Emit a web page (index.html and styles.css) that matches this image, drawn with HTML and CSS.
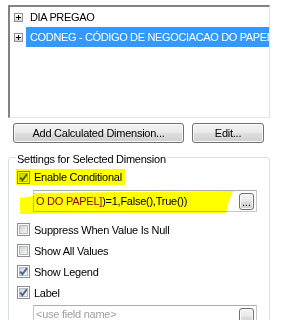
FILE: index.html
```html
<!DOCTYPE html>
<html>
<head>
<meta charset="utf-8">
<link rel="stylesheet" href="styles.css">
</head>
<body>
<svg class="defs" width="0" height="0">
  <defs>
    <linearGradient id="cbg" x1="0" y1="0" x2="1" y2="1">
      <stop offset="0" stop-color="#cbcfd5"/>
      <stop offset="1" stop-color="#f7f7f7"/>
    </linearGradient>
    <linearGradient id="pg" x1="0" y1="0" x2="0" y2="1">
      <stop offset="0" stop-color="#ffffff"/>
      <stop offset="1" stop-color="#d2d2d2"/>
    </linearGradient>
    <symbol id="box" viewBox="0 0 13 13">
      <rect x="0.5" y="0.5" width="12" height="12" fill="#fff" stroke="#8e8f8f"/>
      <rect x="2.5" y="2.5" width="8" height="8" fill="url(#cbg)" stroke="#b7bcc4"/>
    </symbol>
    <symbol id="check" viewBox="0 0 13 13">
      <rect x="0.5" y="0.5" width="12" height="12" fill="#fff" stroke="#8e8f8f"/>
      <rect x="2.5" y="2.5" width="8" height="8" fill="url(#cbg)" stroke="#b7bcc4"/>
      <path d="M3.2 6.6 L5.4 9.2 L9.9 3.2" fill="none" stroke="#4a5f97" stroke-width="1.9"/>
    </symbol>
    <symbol id="plus" viewBox="0 0 9 9">
      <rect x="0.5" y="0.5" width="8" height="8" fill="url(#pg)" stroke="#919191"/>
      <path d="M2 4.5 H7 M4.5 2 V7" stroke="#000" stroke-width="1"/>
    </symbol>
  </defs>
</svg>

<div class="listbox">
  <div class="row">
    <svg class="plus"><use href="#plus"/></svg>
    <span class="item">DIA PREGAO</span>
  </div>
  <div class="row">
    <svg class="plus"><use href="#plus"/></svg>
    <span class="item sel">CODNEG - CÓDIGO DE NEGOCIACAO DO PAPEL</span>
  </div>
</div>

<div class="buttons">
  <button class="btn add">Add Calculated Dimension...</button>
  <button class="btn edit">Edit...</button>
</div>

<div class="group">
  <div class="legend">Settings for Selected Dimension</div>

  <div class="hl">
    <svg class="cb"><use href="#check"/></svg>
    <span>Enable Conditional</span>
  </div>

  <div class="field cond">
    <span class="txt"><span class="red">O DO PAPEL]</span><span class="blue">)=1,False(),True())</span></span>
    <span class="dots">...</span>
  </div>

  <div class="opt"><svg class="cb"><use href="#box"/></svg><span>Suppress When Value Is Null</span></div>
  <div class="opt"><svg class="cb"><use href="#box"/></svg><span>Show All Values</span></div>
  <div class="opt"><svg class="cb"><use href="#check"/></svg><span>Show Legend</span></div>
  <div class="opt"><svg class="cb"><use href="#check"/></svg><span>Label</span></div>

  <div class="field name">
    <span class="txt ph">&lt;use field name&gt;</span>
    <span class="dots"></span>
  </div>
</div>

<svg class="marker" width="293" height="320" viewBox="0 0 293 320">
  <path d="M20 198 L34 196 L34 193 L120 192 L233 191 L229 201 L226 213 L120 213 L20 214 Z" fill="#ffff00"/>
</svg>
</body>
</html>
```

FILE: styles.css
```css
html, body {
  margin: 0;
  padding: 0;
  background: #ffffff;
}

body {
  position: relative;
  width: 293px;
  height: 320px;
  overflow: hidden;
  font-family: "Liberation Sans", Arial, sans-serif;
  font-size: 11px;
  letter-spacing: -0.25px;
  color: #000;
}

.defs {
  position: absolute;
  width: 0;
  height: 0;
}

.listbox {
  box-sizing: border-box;
  margin: 5px 0 0 8px;
  width: 262px;
  height: 113px;
  border-top: 2px solid #828282;
  border-left: 2px solid #828282;
  border-right: 1px solid #e3e3e3;
  border-bottom: 1px solid #e3e3e3;
  overflow: hidden;
  display: flex;
  flex-direction: column;
}

.row {
  display: flex;
  align-items: center;
  height: 20px;
  white-space: nowrap;
}

.plus {
  width: 9px;
  height: 9px;
  margin-left: 4px;
  margin-top: 1px;
  flex: none;
}

.item {
  margin-left: 3px;
  padding-left: 4px;
  height: 20px;
  line-height: 20px;
  letter-spacing: -0.35px;
  flex: 1;
  white-space: nowrap;
  overflow: hidden;
}

.item.sel {
  background: #3399ff;
  color: #ffffff;
}

.buttons {
  display: flex;
  gap: 8px;
  margin: 5px 0 0 13px;
}

.btn {
  box-sizing: border-box;
  height: 20px;
  padding: 0;
  border: 1px solid #707070;
  border-radius: 3px;
  background: linear-gradient(#f2f2f2 0%, #ebebeb 45%, #dddddd 55%, #cfcfcf 100%);
  box-shadow: inset 0 0 0 1px #fbfbfb;
  font-family: "Liberation Sans", Arial, sans-serif;
  font-size: 11px;
  letter-spacing: -0.25px;
  color: #000;
}

.btn.add { width: 171px; }
.btn.edit { width: 72px; }

.group {
  box-sizing: border-box;
  margin: 14px 0 0 8px;
  width: 262px;
  height: 200px;
  border: 1px solid #d5dfe5;
  border-radius: 3px;
}

.legend {
  width: fit-content;
  margin: -5px 0 0 7px;
  padding: 0 1px;
  height: 13px;
  line-height: 13px;
  background: #fff;
  white-space: nowrap;
}

.hl {
  position: relative;
  display: flex;
  align-items: center;
  width: fit-content;
  height: 16px;
  margin: 3px 0 0 7px;
  padding-right: 3px;
  white-space: nowrap;
}

.hl::after {
  content: "";
  position: absolute;
  inset: 0;
  background: #ffff00;
  mix-blend-mode: multiply;
}

.cb {
  width: 13px;
  height: 13px;
  flex: none;
}

.hl .cb {
  margin-left: 1px;
  margin-right: 4px;
}

.field {
  box-sizing: border-box;
  display: flex;
  align-items: center;
  justify-content: space-between;
  width: 224px;
  height: 22px;
  margin-left: 24px;
  border: 1px solid #c5c9cf;
  border-top-color: #abadb3;
  background: #fff;
}

.field.cond { margin-top: 5px; }
.field.name { margin-top: 2px; align-items: flex-start; }
.field.name .txt { padding-top: 2px; }
.field.name .dots { margin-top: 2px; }

.txt {
  padding-left: 2px;
  white-space: nowrap;
}

.red { color: #8b0000; }
.blue { color: #000066; }

.ph { color: #a0a0a0; }

.dots {
  box-sizing: border-box;
  width: 15px;
  height: 17px;
  margin-right: 2px;
  border: 1px solid #707070;
  border-radius: 3px;
  background: linear-gradient(#f2f2f2 0%, #ebebeb 45%, #dddddd 55%, #cfcfcf 100%);
  box-shadow: inset 0 0 0 1px #fbfbfb;
  font-size: 10px;
  line-height: 17px;
  text-align: center;
  letter-spacing: 0;
}

.opt {
  display: flex;
  align-items: center;
  height: 21px;
  margin-left: 8px;
  white-space: nowrap;
}

.cond + .opt { margin-top: 7px; }

.opt .cb {
  margin-right: 4px;
}

.marker {
  position: absolute;
  left: 0;
  top: 0;
  mix-blend-mode: multiply;
  pointer-events: none;
}
```
